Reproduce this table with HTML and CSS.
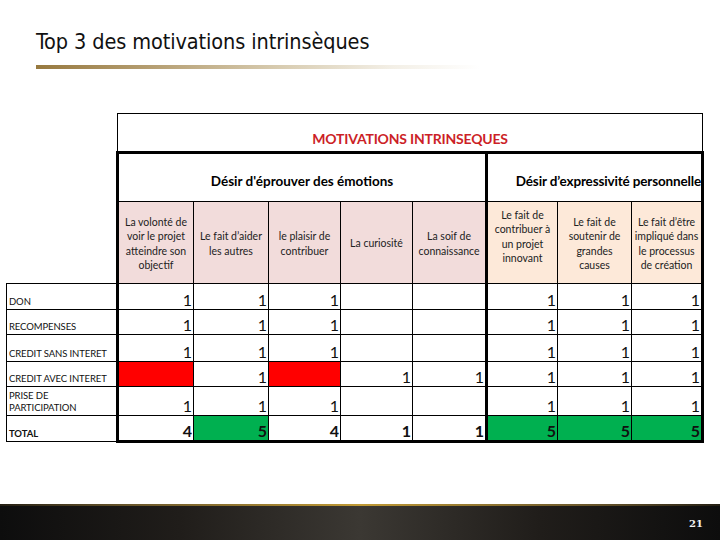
FILE: index.html
```html
<!DOCTYPE html>
<html lang="fr">
<head>
<meta charset="utf-8">
<title>Top 3 des motivations intrinsèques</title>
<link rel="stylesheet" href="styles.css">
</head>
<body>
<div class="slide">
  <header class="title-wrap">
    <h1 class="title">Top 3 des motivations intrinsèques</h1>
    <div class="rule"></div>
  </header>
  <main class="content">
    <table class="grid">
      <colgroup>
        <col class="w-label">
        <col class="w76"><col class="w75"><col class="w72"><col class="w72"><col class="w74">
        <col class="w71"><col class="w74"><col class="w71">
      </colgroup>
      <tr class="r-title">
        <td class="blank"></td>
        <td colspan="8" class="main-title">MOTIVATIONS INTRINSEQUES</td>
      </tr>
      <tr class="r-group">
        <td class="blank"></td>
        <td colspan="5" class="group g1">Désir d'éprouver des émotions</td>
        <td colspan="3" class="group g2">Désir d’expressivité personnelle</td>
      </tr>
      <tr class="r-head">
        <td class="blank"></td>
        <td class="hd pink c1">La volonté de<br>voir le projet<br>atteindre son<br>objectif</td>
        <td class="hd pink">Le fait d’aider<br>les autres</td>
        <td class="hd pink">le plaisir de<br>contribuer</td>
        <td class="hd pink">La curiosité</td>
        <td class="hd pink">La soif de<br>connaissance</td>
        <td class="hd peach c6"><span class="raise">Le fait de<br>contribuer à<br>un projet<br>innovant</span></td>
        <td class="hd peach">Le fait de<br>soutenir de<br>grandes<br>causes</td>
        <td class="hd peach c8">Le fait d’être<br>impliqué dans<br>le processus<br>de création</td>
      </tr>
      <tr class="r-a">
        <td class="lbl">DON</td>
        <td class="n c1">1</td><td class="n">1</td><td class="n">1</td><td class="n"></td><td class="n"></td>
        <td class="n c6">1</td><td class="n">1</td><td class="n c8">1</td>
      </tr>
      <tr class="r-b">
        <td class="lbl">RECOMPENSES</td>
        <td class="n c1">1</td><td class="n">1</td><td class="n">1</td><td class="n"></td><td class="n"></td>
        <td class="n c6">1</td><td class="n">1</td><td class="n c8">1</td>
      </tr>
      <tr class="r-c">
        <td class="lbl">CREDIT SANS INTERET</td>
        <td class="n c1">1</td><td class="n">1</td><td class="n">1</td><td class="n"></td><td class="n"></td>
        <td class="n c6">1</td><td class="n">1</td><td class="n c8">1</td>
      </tr>
      <tr class="r-d">
        <td class="lbl">CREDIT AVEC INTERET</td>
        <td class="n c1 red"></td><td class="n">1</td><td class="n red"></td><td class="n">1</td><td class="n">1</td>
        <td class="n c6">1</td><td class="n">1</td><td class="n c8">1</td>
      </tr>
      <tr class="r-e">
        <td class="lbl">PRISE DE<br>PARTICIPATION</td>
        <td class="n c1">1</td><td class="n">1</td><td class="n">1</td><td class="n"></td><td class="n"></td>
        <td class="n c6">1</td><td class="n">1</td><td class="n c8">1</td>
      </tr>
      <tr class="r-f total">
        <td class="lbl tot-lbl">TOTAL</td>
        <td class="n c1">4</td><td class="n green">5</td><td class="n">4</td><td class="n">1</td><td class="n">1</td>
        <td class="n c6 green">5</td><td class="n green">5</td><td class="n c8 green">5</td>
      </tr>
    </table>
  </main>
  <footer class="footer">
    <span class="pagenum">21</span>
  </footer>
</div>
</body>
</html>
```
FILE: styles.css
```css
* { box-sizing: border-box; }
html, body { margin: 0; padding: 0; background: #fff; }
.slide {
  width: 720px;
  height: 540px;
  display: flex;
  flex-direction: column;
  overflow: hidden;
  background: #fff;
}
.title-wrap {
  padding: 28px 0 0 36px;
}
.title {
  margin: 0;
  font-family: "DejaVu Sans Condensed", "DejaVu Sans", sans-serif;
  font-stretch: condensed;
  font-weight: normal;
  font-size: 21.5px;
  line-height: 28px;
  color: #111;
  letter-spacing: -0.1px;
}
.rule {
  margin-top: 9px;
  width: 444px;
  height: 4px;
  background: linear-gradient(to right, #97793f 0%, #b49d70 25%, #d8ccb1 55%, #f3efe6 80%, rgba(255,255,255,0) 100%);
}
.content {
  flex: 1;
  padding: 44px 0 0 6px;
}
.grid {
  border-collapse: collapse;
  table-layout: fixed;
  width: 697px;
  font-family: "Lato", "Open Sans", sans-serif;
  color: #000;
}
.w-label { width: 111px; }
.w76 { width: 76px; }
.w75 { width: 75px; }
.w72 { width: 72px; }
.w74 { width: 74px; }
.w71 { width: 71px; }
.grid td {
  padding: 0;
  border: 1px solid #000;
  vertical-align: bottom;
}
.grid td.blank { border: none; }
.r-title td.main-title {
  height: 39px;
  border-bottom: 3px solid #000;
  text-align: center;
  color: #cc1f27;
  font-weight: bold;
  font-size: 14px;
  padding-bottom: 4px;
  letter-spacing: -0.2px;
}
.r-group td.group {
  height: 49px;
  border-top: 3px solid #000;
  font-weight: bold;
  font-size: 13.5px;
  padding-bottom: 12px;
}
.g1 { border-left: 3px solid #000 !important; text-align: center; }
.g2 { border-left: 3px solid #000 !important; border-right: 3px solid #000 !important; text-align: right; letter-spacing: -0.15px; }
.r-head td.hd {
  height: 82px;
  vertical-align: middle;
  text-align: center;
  font-size: 10.5px;
  line-height: 14.5px;
  color: #222;
  white-space: nowrap;
  padding-top: 2px;
}
.pink { background: #f2dcdb; }
.peach { background: #fde9d9; }
.raise { display: inline-block; position: relative; top: -7px; }
.grid td.c1 { border-left: 3px solid #000; }
.grid td.c6 { border-left: 3px solid #000; }
.grid td.c8 { border-right: 3px solid #000; }
.grid td.lbl {
  font-size: 9.5px;
  line-height: 12px;
  color: #111;
  padding: 0 0 1px 2px;
  white-space: nowrap;
  letter-spacing: -0.1px;
}
.grid td.n {
  text-align: right;
  font-size: 16px;
  line-height: 17px;
  padding: 0 1px 1px 0;
  color: #111;
}
.r-a td { height: 26px; }
.r-b td { height: 25px; }
.r-c td { height: 27px; }
.r-d td { height: 25px; }
.r-e td { height: 29px; }
.r-f td { height: 26px; }
.total td.n {
  font-weight: bold;
  border-bottom: 3px solid #000;
}
.tot-lbl { font-weight: bold; }
.red { background: #ff0000; }
.green { background: #00b050; }
.footer {
  height: 36px;
  display: flex;
  justify-content: flex-end;
  align-items: center;
  padding-right: 17px;
  background: linear-gradient(to right, #0d0d0d 0%, #201d1a 25%, #3b3833 50%, #201d1a 75%, #0d0d0d 100%);
  border-top: 2px solid transparent;
  border-image: linear-gradient(to right, rgba(120,95,40,0.2) 0%, #6e5a2c 20%, #c09a35 50%, #6e5a2c 80%, rgba(120,95,40,0.2) 100%) 1;
}
.pagenum {
  font-family: "DejaVu Serif", serif;
  font-weight: bold;
  font-size: 10px;
  color: #f2f2f2;
}
```
